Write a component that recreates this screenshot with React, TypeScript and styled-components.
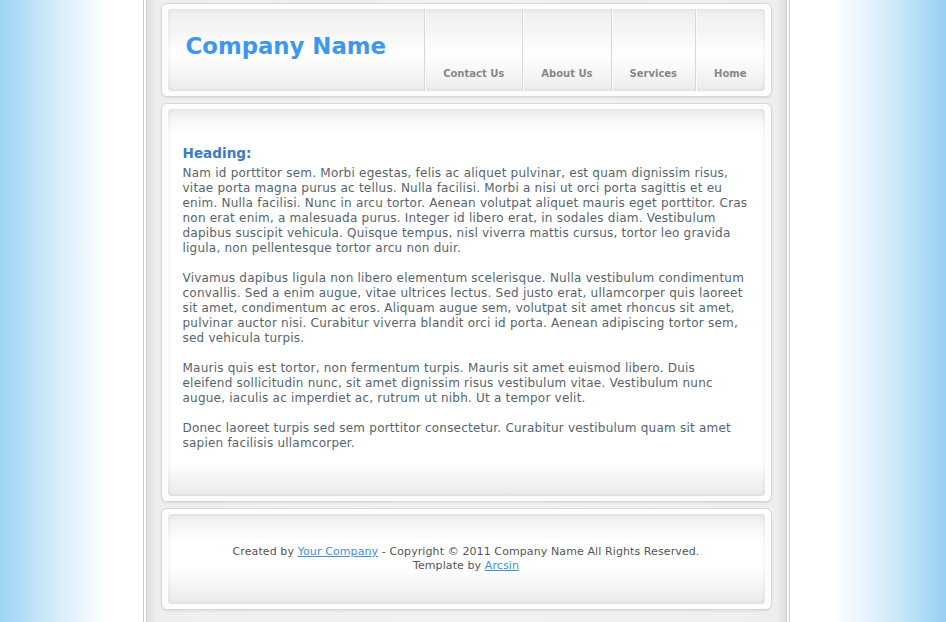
import React from 'react';
import styled, { createGlobalStyle } from 'styled-components';

const GlobalStyle = createGlobalStyle`
  html, body {
    margin: 0;
    padding: 0;
    height: 100%;
  }
  body {
    overflow: hidden;
    font-family: 'DejaVu Sans', Verdana, sans-serif;
    background: linear-gradient(
      to right,
      #9ed3f2 0,
      #d4ecfa 55px,
      #ffffff 108px,
      #ffffff calc(100% - 112px),
      #d2ebfa calc(100% - 56px),
      #98d0f1 100%
    );
  }
`;

const Page = styled.div`
  display: flex;
  justify-content: center;
  padding-right: 14px;
  min-height: 100vh;
  box-sizing: border-box;
`;

const Wall = styled.div`
  display: flex;
  width: 647px;
  box-sizing: border-box;
  border-left: 1px solid #cbcbcb;
  border-right: 1px solid #cbcbcb;
  padding: 0 2px;
  background: #fff;
`;

const Column = styled.div`
  flex: 1;
  display: flex;
  flex-direction: column;
  gap: 6px;
  padding: 3px 14px 12px;
  border-left: 1px solid #cfcfcf;
  border-right: 1px solid #cfcfcf;
  background: linear-gradient(
    to right,
    #dfdfdf 0,
    #eeeeee 10px,
    #f1f1f1 50%,
    #eeeeee calc(100% - 10px),
    #dfdfdf 100%
  );
`;

const Panel = styled.section`
  border: 1px solid #d7d7d7;
  border-radius: 6px;
  background: #fdfdfd;
  padding: 5px 6px;
  box-shadow: 0 1px 2px rgba(0, 0, 0, 0.08);
`;

const PanelInner = styled.div<{ $fade?: number }>`
  border-radius: 4px;
  box-shadow: inset 0 0 5px rgba(0, 0, 0, 0.09);
  background: linear-gradient(
    to bottom,
    #ececec 0,
    #f8f8f8 ${(p) => (p.$fade ?? 28) * 0.5}px,
    #ffffff ${(p) => p.$fade ?? 28}px,
    #ffffff calc(100% - ${(p) => (p.$fade ?? 28) + 6}px),
    #e9e9e9 100%
  );
`;

const HeaderInner = styled(PanelInner)`
  display: flex;
  height: 82px;
  background: linear-gradient(
    to bottom,
    #eeeeee 0,
    #f6f6f6 30%,
    #ffffff 55%,
    #f6f6f6 78%,
    #ebebeb 100%
  );
`;

const Logo = styled.h1`
  flex: 1;
  margin: 0;
  padding: 0 0 8px 18px;
  display: flex;
  align-items: center;
  font-family: 'DejaVu Sans', Verdana, sans-serif;
  font-size: 22.8px;
  font-weight: bold;
  color: #3d97ee;
`;

const Nav = styled.nav`
  display: flex;
`;

const NavItem = styled.a`
  display: flex;
  align-items: flex-end;
  padding: 0 18px 11px;
  border-left: 1px solid #d8d8d8;
  box-shadow: inset 1px 0 0 #fbfbfb;
  font-size: 10px;
  line-height: 12px;
  font-weight: bold;
  color: #888888;
  text-decoration: none;
  cursor: pointer;
`;

const Content = styled(PanelInner)`
  padding: 34px 17px 45px 15px;
  color: #56646d;
`;

const Heading = styled.h2`
  margin: 0 0 3px;
  font-size: 13.6px;
  line-height: 20px;
  font-weight: bold;
  color: #3a7cc4;
`;

const Paragraph = styled.p`
  margin: 0 0 15px;
  font-size: 12px;
  line-height: 15px;
  letter-spacing: 0.22px;
  &:last-child {
    margin-bottom: 0;
  }
`;

const Footer = styled(PanelInner)`
  height: 90px;
  display: flex;
  flex-direction: column;
  align-items: center;
  justify-content: center;
  font-size: 11px;
  line-height: 14px;
  color: #555;
  text-align: center;
  letter-spacing: 0.1px;
`;

const FooterLink = styled.a`
  color: #3d8fe0;
  text-decoration: underline;
  cursor: pointer;
`;

const navLinks = ['Contact Us', 'About Us', 'Services', 'Home'];

const paragraphs = [
  'Nam id porttitor sem. Morbi egestas, felis ac aliquet pulvinar, est quam dignissim risus, vitae porta magna purus ac tellus. Nulla facilisi. Morbi a nisi ut orci porta sagittis et eu enim. Nulla facilisi. Nunc in arcu tortor. Aenean volutpat aliquet mauris eget porttitor. Cras non erat enim, a malesuada purus. Integer id libero erat, in sodales diam. Vestibulum dapibus suscipit vehicula. Quisque tempus, nisl viverra mattis cursus, tortor leo gravida ligula, non pellentesque tortor arcu non duir.',
  'Vivamus dapibus ligula non libero elementum scelerisque. Nulla vestibulum condimentum convallis. Sed a enim augue, vitae ultrices lectus. Sed justo erat, ullamcorper quis laoreet sit amet, condimentum ac eros. Aliquam augue sem, volutpat sit amet rhoncus sit amet, pulvinar auctor nisi. Curabitur viverra blandit orci id porta. Aenean adipiscing tortor sem, sed vehicula turpis.',
  'Mauris quis est tortor, non fermentum turpis. Mauris sit amet euismod libero. Duis eleifend sollicitudin nunc, sit amet dignissim risus vestibulum vitae. Vestibulum nunc augue, iaculis ac imperdiet ac, rutrum ut nibh. Ut a tempor velit.',
  'Donec laoreet turpis sed sem porttitor consectetur. Curabitur vestibulum quam sit amet sapien facilisis ullamcorper.',
];

const App = () => {
  return (
    <Page>
      <GlobalStyle />
      <Wall>
        <Column>
          <Panel>
            <HeaderInner>
              <Logo>Company Name</Logo>
              <Nav>
                {navLinks.map((label) => (
                  <NavItem key={label}>{label}</NavItem>
                ))}
              </Nav>
            </HeaderInner>
          </Panel>

          <Panel>
            <Content $fade={26}>
              <Heading>Heading:</Heading>
              {paragraphs.map((text, i) => (
                <Paragraph key={i}>{text}</Paragraph>
              ))}
            </Content>
          </Panel>

          <Panel>
            <Footer $fade={30}>
              <div>
                Created by <FooterLink>Your Company</FooterLink> - Copyright ©
                2011 Company Name All Rights Reserved.
              </div>
              <div>
                Template by <FooterLink>Arcsin</FooterLink>
              </div>
            </Footer>
          </Panel>
        </Column>
      </Wall>
    </Page>
  );
};

export default App;
